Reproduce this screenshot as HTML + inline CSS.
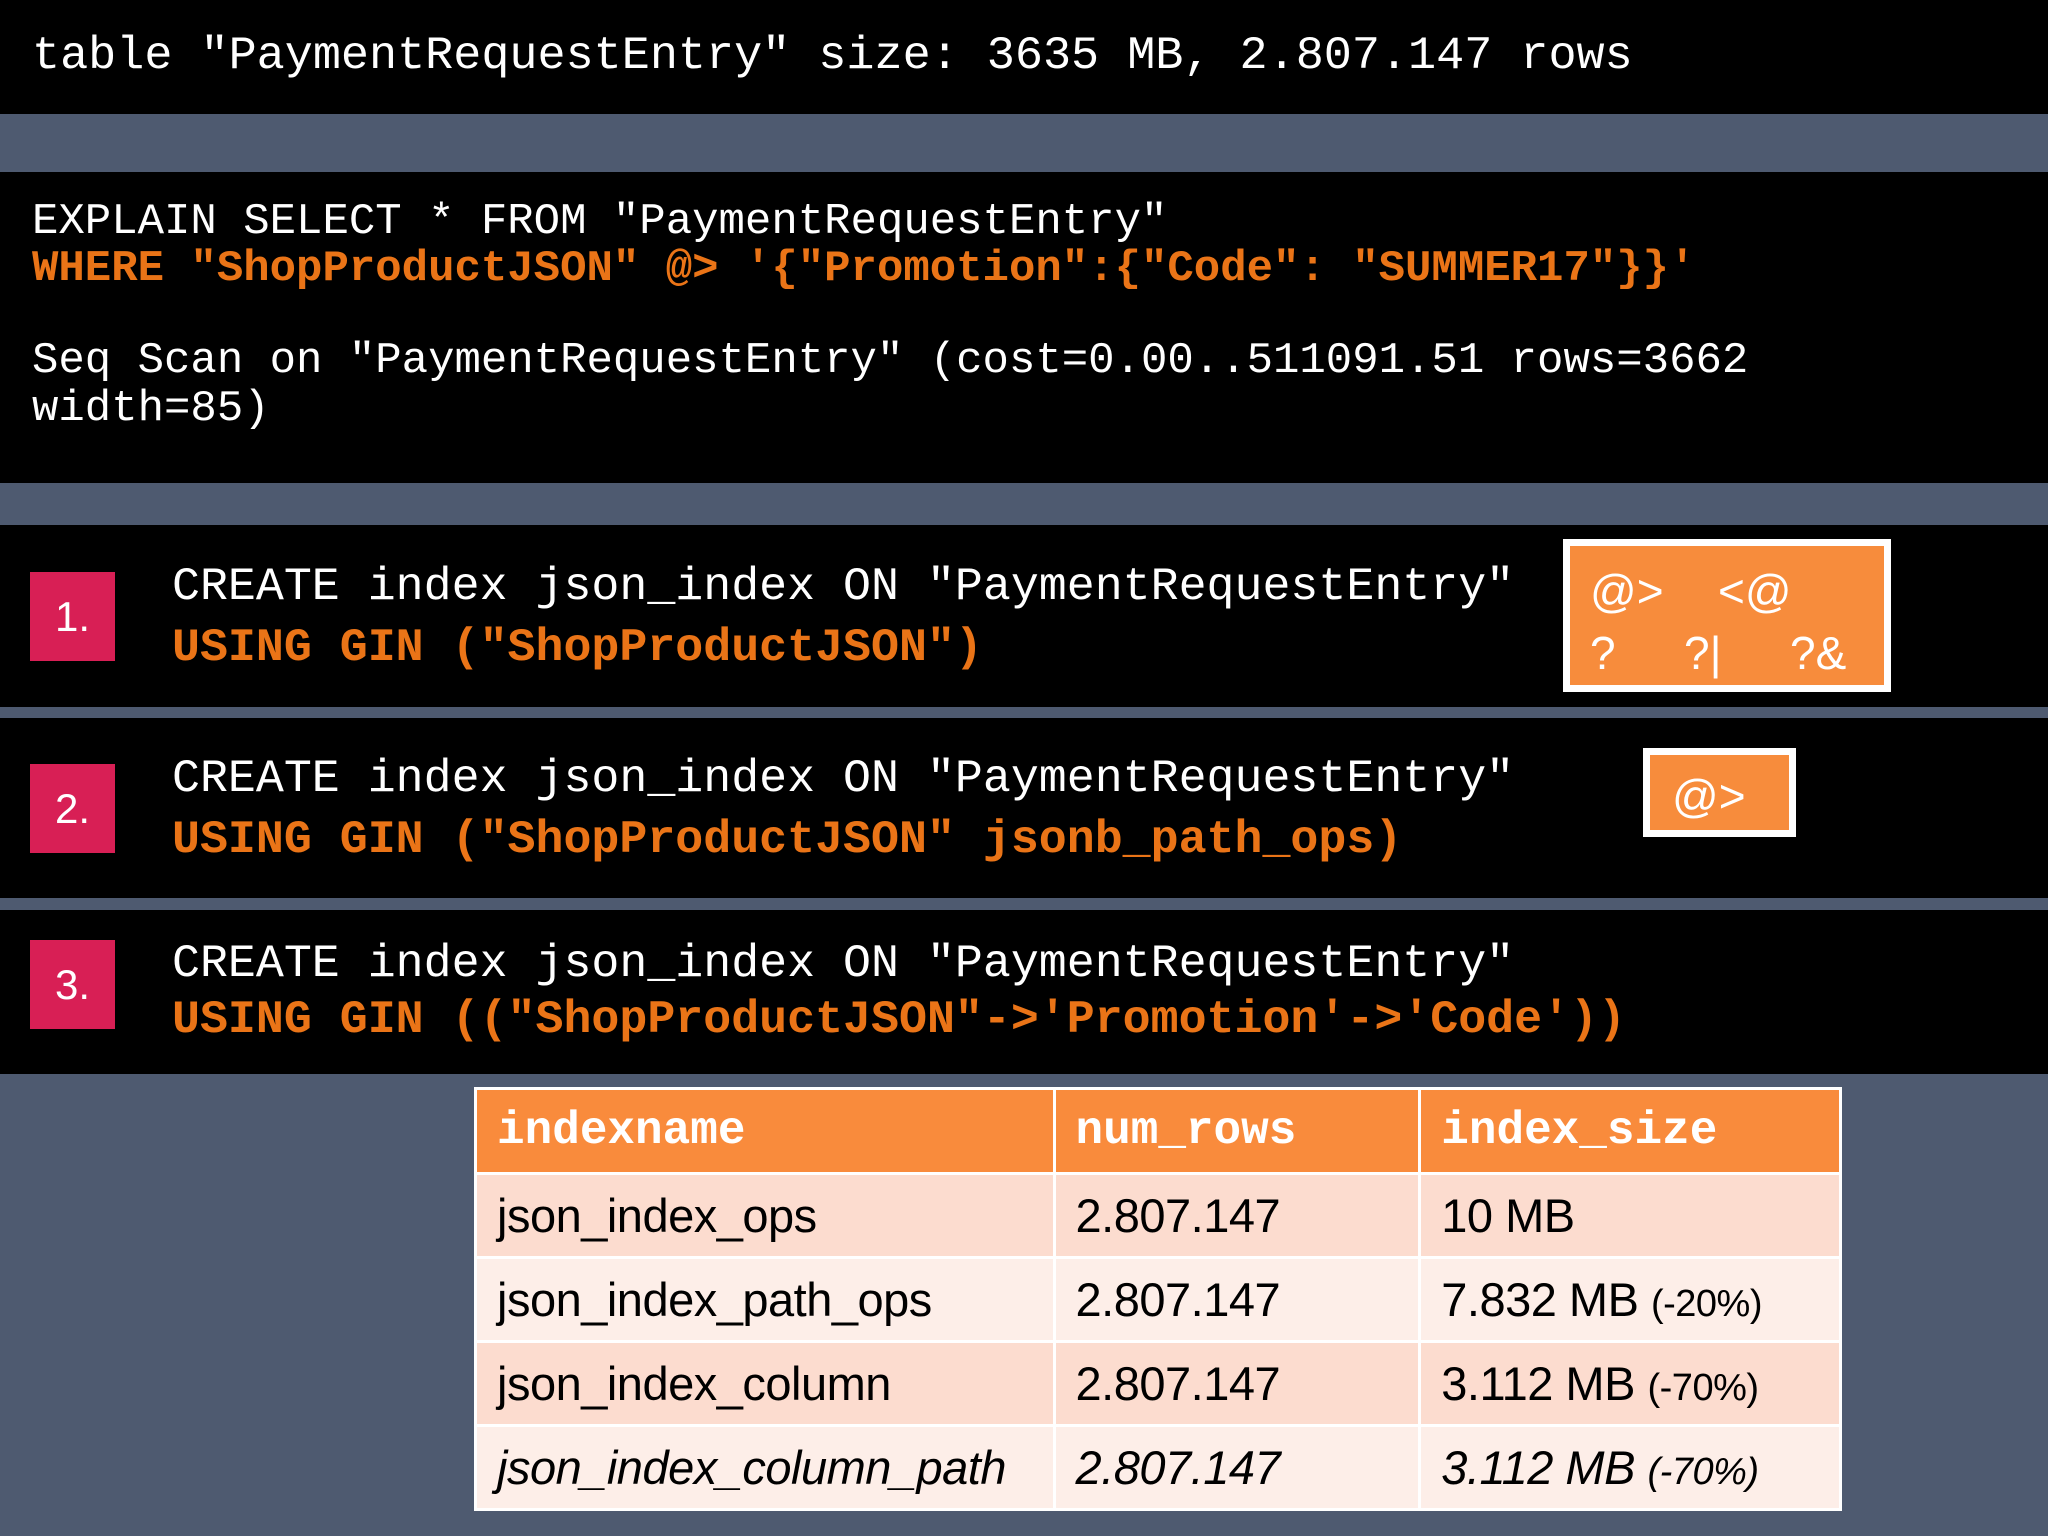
<!DOCTYPE html>
<html><head><meta charset="utf-8"><style>
*{margin:0;padding:0;box-sizing:border-box}
body{width:2048px;height:1536px;background:#4e5a70;position:relative;overflow:hidden;font-family:"Liberation Mono","DejaVu Sans Mono",monospace}
.blk{position:absolute;left:0;width:2048px;background:#000}
.t{position:absolute;white-space:pre;color:#fff;line-height:1}
.o{color:#ea7417;font-weight:bold}
.badge{position:absolute;left:30px;width:85px;background:#d81f55;color:#fff;font-family:"Liberation Sans",sans-serif;font-size:42px;display:flex;align-items:center;justify-content:center}
.box{position:absolute;background:#f78c3c;border:7px solid #fff;color:#fff;font-family:"Liberation Sans",sans-serif;font-size:44px}
table{position:absolute;left:474px;top:1087px;width:1368px;border-collapse:collapse;background:#fff}
td{border:3px solid #fff;height:84px;padding:0 0 0 20px;font-family:"Liberation Sans",sans-serif;font-size:47px;color:#000;letter-spacing:-0.5px}
tr.h td{background:#f98b3c;color:#fff;font-family:"Liberation Mono",monospace;font-weight:bold;font-size:46px;letter-spacing:0;height:85px}
tr.a td{background:#fcdccf}
tr.b td{background:#fdeee8}
tr.i td{font-style:italic}
small{font-size:38px}
</style></head><body>
<div class="blk" style="top:0;height:114px"></div>
<div class="t" style="left:32px;top:34px;font-size:46.8px">table "PaymentRequestEntry" size: 3635 MB, 2.807.147 rows</div>

<div class="blk" style="top:172px;height:311px"></div>
<div class="t" style="left:32px;top:200px;font-size:44px">EXPLAIN SELECT * FROM "PaymentRequestEntry"</div>
<div class="t o" style="left:32px;top:247px;font-size:44px">WHERE "ShopProductJSON" @> '{"Promotion":{"Code": "SUMMER17"}}'</div>
<div class="t" style="left:32px;top:339px;font-size:44px">Seq Scan on "PaymentRequestEntry" (cost=0.00..511091.51 rows=3662</div>
<div class="t" style="left:32px;top:387px;font-size:44px">width=85)</div>

<div class="blk" style="top:525px;height:182px"></div>
<div class="badge" style="top:572px;height:89px">1.</div>
<div class="t" style="left:172px;top:564px;font-size:46.6px">CREATE index json_index ON "PaymentRequestEntry"</div>
<div class="t o" style="left:172px;top:625px;font-size:46.6px">USING GIN ("ShopProductJSON")</div>
<div class="box" style="left:1563px;top:539px;width:328px;height:153px">
<div class="t" style="left:20px;top:22px;font-size:46px">@&gt;</div>
<div class="t" style="left:148px;top:22px;font-size:46px">&lt;@</div>
<div class="t" style="left:20px;top:84px;font-size:46px">?</div>
<div class="t" style="left:114px;top:84px;font-size:46px">?|</div>
<div class="t" style="left:220px;top:84px;font-size:46px">?&amp;</div>
</div>

<div class="blk" style="top:718px;height:180px"></div>
<div class="badge" style="top:764px;height:89px">2.</div>
<div class="t" style="left:172px;top:756px;font-size:46.6px">CREATE index json_index ON "PaymentRequestEntry"</div>
<div class="t o" style="left:172px;top:817px;font-size:46.6px">USING GIN ("ShopProductJSON" jsonb_path_ops)</div>
<div class="box" style="left:1643px;top:748px;width:153px;height:89px">
<div class="t" style="left:22px;top:18px;font-size:46px">@&gt;</div>
</div>

<div class="blk" style="top:910px;height:164px"></div>
<div class="badge" style="top:940px;height:89px">3.</div>
<div class="t" style="left:172px;top:941px;font-size:46.6px">CREATE index json_index ON "PaymentRequestEntry"</div>
<div class="t o" style="left:172px;top:997px;font-size:46.6px">USING GIN (("ShopProductJSON"-&gt;'Promotion'-&gt;'Code'))</div>

<table>
<colgroup><col style="width:579px"><col style="width:367px"><col style="width:422px"></colgroup>
<tr class="h"><td>indexname</td><td>num_rows</td><td>index_size</td></tr>
<tr class="a"><td>json_index_ops</td><td>2.807.147</td><td>10 MB</td></tr>
<tr class="b"><td>json_index_path_ops</td><td>2.807.147</td><td>7.832 MB <small>(-20%)</small></td></tr>
<tr class="a"><td>json_index_column</td><td>2.807.147</td><td>3.112 MB <small>(-70%)</small></td></tr>
<tr class="b i"><td>json_index_column_path</td><td>2.807.147</td><td>3.112 MB <small>(-70%)</small></td></tr>
</table>
</body></html>
